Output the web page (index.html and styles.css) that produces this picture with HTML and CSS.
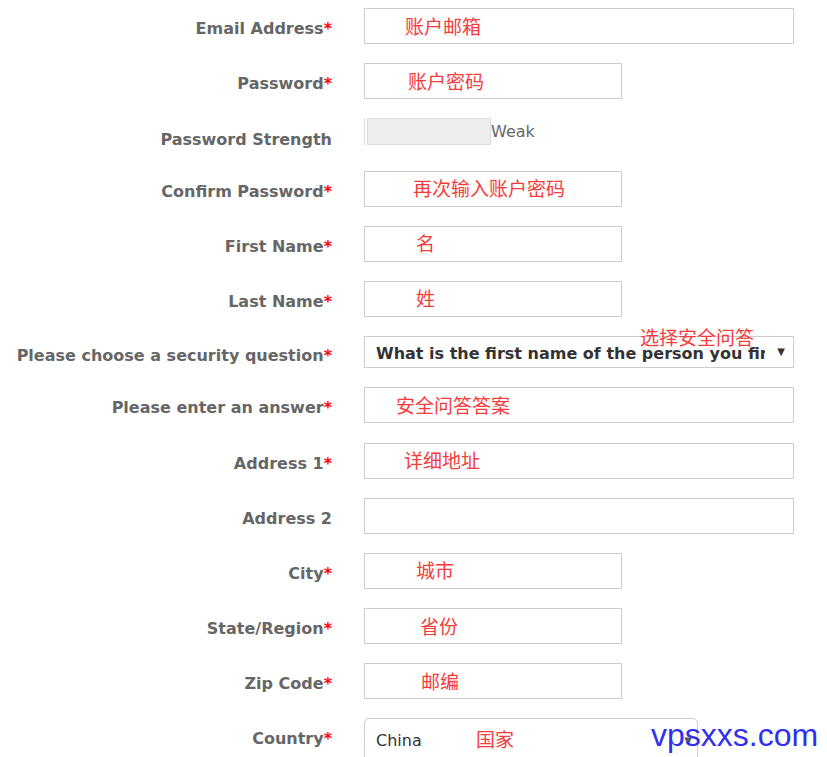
FILE: index.html
```html
<!DOCTYPE html>
<html lang="en">
<head>
    <meta charset="UTF-8">
    <meta name="viewport" content="width=device-width, initial-scale=1.0">
    <title>Register</title>
    <link rel="stylesheet" href="styles.css">
</head>
<body>
    <form class="signup">
        <div class="row">
            <label class="field-label" for="email">Email Address<span class="req">*</span></label>
            <input class="text wide ind-email" type="text" id="email" placeholder="账户邮箱">
        </div>
        <div class="row">
            <label class="field-label" for="password">Password<span class="req">*</span></label>
            <input class="text short ind-pass" type="text" id="password" placeholder="账户密码">
        </div>
        <div class="row row-strength">
            <label class="field-label">Password Strength</label>
            <div class="strength">
                <div class="strength-bar"></div>
                <span class="strength-text">Weak</span>
            </div>
        </div>
        <div class="row">
            <label class="field-label" for="confirm">Confirm Password<span class="req">*</span></label>
            <input class="text short ind-confirm" type="text" id="confirm" placeholder="再次输入账户密码">
        </div>
        <div class="row">
            <label class="field-label" for="firstname">First Name<span class="req">*</span></label>
            <input class="text short ind-name" type="text" id="firstname" placeholder="名">
        </div>
        <div class="row">
            <label class="field-label" for="lastname">Last Name<span class="req">*</span></label>
            <input class="text short ind-name" type="text" id="lastname" placeholder="姓">
        </div>
        <div class="row row-select">
            <label class="field-label" for="question">Please choose a security question<span class="req">*</span></label>
            <div class="select-wrap">
                <select class="question" id="question">
                    <option>What is the first name of the person you first kissed?</option>
                </select>
                <span class="select-arrow">&#9660;</span>
                <span class="note note-question">选择安全问答</span>
            </div>
        </div>
        <div class="row">
            <label class="field-label" for="answer">Please enter an answer<span class="req">*</span></label>
            <input class="text wide ind-answer" type="text" id="answer" placeholder="安全问答答案">
        </div>
        <div class="row">
            <label class="field-label" for="address1">Address 1<span class="req">*</span></label>
            <input class="text wide ind-addr" type="text" id="address1" placeholder="详细地址">
        </div>
        <div class="row">
            <label class="field-label" for="address2">Address 2</label>
            <input class="text wide" type="text" id="address2">
        </div>
        <div class="row">
            <label class="field-label" for="city">City<span class="req">*</span></label>
            <input class="text short ind-name" type="text" id="city" placeholder="城市">
        </div>
        <div class="row">
            <label class="field-label" for="state">State/Region<span class="req">*</span></label>
            <input class="text short ind-state" type="text" id="state" placeholder="省份">
        </div>
        <div class="row">
            <label class="field-label" for="zip">Zip Code<span class="req">*</span></label>
            <input class="text short ind-zip" type="text" id="zip" placeholder="邮编">
        </div>
        <div class="row">
            <label class="field-label" for="country">Country<span class="req">*</span></label>
            <div class="country-wrap">
                <select class="country" id="country">
                    <option>China</option>
                </select>
                <span class="country-arrow">&#9660;</span>
                <span class="note note-country">国家</span>
            </div>
        </div>
    </form>

    <div class="watermark">vpsxxs.com</div>
</body>
</html>
```

FILE: styles.css
```css
body {
    margin: 8px;
    background-color: #fff;
    font-family: "DejaVu Sans", Verdana, sans-serif;
}
.signup {
    display: flex;
    flex-direction: column;
    gap: 19.2px;
}
.row {
    display: grid;
    grid-template-columns: 324px 1fr;
    column-gap: 32px;
    align-items: start;
}
.field-label {
    padding-top: 11px;
    text-align: right;
    font-size: 16px;
    font-weight: bold;
    line-height: 20px;
    color: #666;
    white-space: nowrap;
}
.req {
    color: #f00;
}
.text {
    height: 36px;
    box-sizing: border-box;
    padding-top: 5px;
    padding-bottom: 0;
    border: 1px solid #ccc;
    background-color: #fff;
    font-size: 16px;
    outline: none;
}
.text::placeholder {
    color: #f53c3c;
    opacity: 1;
    font-family: "Noto Sans CJK SC", sans-serif;
    font-size: 19px;
}
.wide {
    width: 430px;
}
.short {
    width: 258px;
}
.ind-email { padding-left: 40px; }
.ind-pass { padding-left: 43px; }
.ind-confirm { padding-left: 48px; }
.ind-name { padding-left: 51px; }
.ind-answer { padding-left: 31px; }
.ind-addr { padding-left: 39px; }
.ind-state { padding-left: 55px; }
.ind-zip { padding-left: 56px; }

.row-strength {
    height: 33px;
}
.row-strength .field-label {
    padding-top: 12px;
}
.strength {
    display: flex;
    align-items: center;
    height: 27px;
    border-left: 1px solid #ddd;
}
.strength-bar {
    width: 124px;
    height: 27px;
    box-sizing: border-box;
    margin-left: 2px;
    border: 1px solid #ddd;
    background-color: #eee;
}
.strength-text {
    margin-top: -1px;
    font-size: 16px;
    color: #666;
}

.row-select .field-label {
    padding-top: 10px;
}
.select-wrap {
    position: relative;
    width: 430px;
    height: 32px;
}
.question {
    width: 100%;
    height: 32px;
    box-sizing: border-box;
    padding: 2px 28px 0 11px;
    border: 1px solid #ccc;
    border-radius: 0;
    background-color: #fff;
    font-family: "DejaVu Sans", Verdana, sans-serif;
    font-size: 16px;
    font-weight: bold;
    color: #333;
    appearance: none;
}
.select-arrow {
    position: absolute;
    right: 9px;
    top: 10px;
    font-size: 10px;
    color: #333;
}
.note {
    position: absolute;
    font-family: "Noto Sans CJK SC", sans-serif;
    font-size: 19px;
    line-height: 22px;
    color: #f53c3c;
    pointer-events: none;
}
.note-question {
    left: 276px;
    top: -10px;
}

.country-wrap {
    position: relative;
    width: 334px;
    height: 40px;
}
.country {
    width: 100%;
    height: 40px;
    box-sizing: border-box;
    padding: 4px 24px 0 11px;
    border: 1px solid #ccc;
    border-radius: 5px 5px 0 0;
    background-color: #fff;
    font-family: "DejaVu Sans", Verdana, sans-serif;
    font-size: 16px;
    color: #333;
    appearance: none;
}
.country-arrow {
    position: absolute;
    right: 6px;
    top: 17px;
    font-size: 10px;
    color: #555;
}
.note-country {
    left: 112px;
    top: 10px;
}

.watermark {
    position: absolute;
    left: 651px;
    top: 717px;
    font-family: "Liberation Sans", Arial, sans-serif;
    font-size: 32px;
    color: #3030f0;
}
```
